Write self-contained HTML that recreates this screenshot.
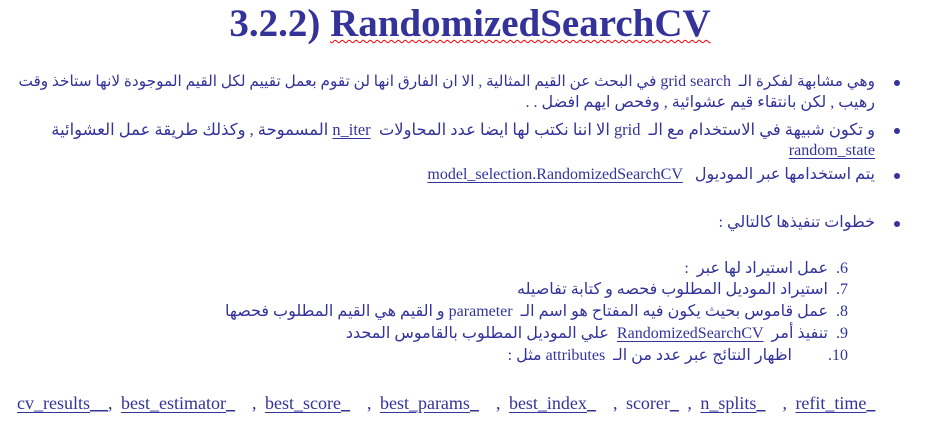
<!DOCTYPE html>
<html><head><meta charset="utf-8"><style>
body{margin:0;width:926px;height:421px;background:#fff;position:relative;overflow:hidden;font-family:"Liberation Serif","DejaVu Sans",serif;color:#333399;}
.t{position:absolute;white-space:nowrap;font-size:16px;line-height:20px;}
.r{direction:rtl;text-align:right;}
.w{text-decoration:underline wavy red;text-decoration-thickness:1px;text-underline-offset:3px;}
.u{text-decoration:underline;}
.b{position:absolute;width:6px;height:6px;border-radius:50%;background:#333399;left:894px;}
</style></head><body>
<div class="t" style="left:0;width:940px;top:0px;text-align:center;font-size:39px;line-height:48px;font-weight:bold;">3.2.2) <span class="w">RandomizedSearchCV</span></div>

<div class="b" style="top:80px"></div>
<div class="t r" style="right:51px;top:72px;font-size:15.3px;">وهي مشابهة لفكرة الـ &nbsp;<span style="font-size:16px">grid search</span> في البحث عن القيم المثالية , الا ان الفارق انها لن تقوم بعمل تقييم لكل القيم الموجودة لانها ستاخذ وقت</div>
<div class="t r" style="right:51px;top:93px;">رهيب , لكن بانتقاء قيم عشوائية , وفحص ايهم افضل . .</div>
<div class="b" style="top:128px"></div>
<div class="t r" style="right:51px;top:120px;font-size:16.4px;">و تكون شبيهة في الاستخدام مع الـ &nbsp;grid الا اننا نكتب لها ايضا عدد المحاولات &nbsp;<span class="w u">n_iter</span> المسموحة , وكذلك طريقة عمل العشوائية</div>
<div class="t" style="right:51px;top:141px;"><span class="w u">random_state</span></div>
<div class="b" style="top:173px"></div>
<div class="t r" style="right:51px;top:165px;">يتم استخدامها عبر الموديول &nbsp;&nbsp;<span class="w u">model_selection.RandomizedSearchCV</span></div>
<div class="b" style="top:221px"></div>
<div class="t r" style="right:51px;top:213px;">خطوات تنفيذها كالتالي :</div>

<div class="t r" style="right:78px;top:259px;">6.&nbsp; عمل استيراد لها عبر &nbsp;:</div>
<div class="t r" style="right:78px;top:280px;">7.&nbsp; استيراد الموديل المطلوب فحصه و كتابة تفاصيله</div>
<div class="t r" style="right:78px;top:302px;">8.&nbsp; عمل قاموس بحيث يكون فيه المفتاح هو اسم الـ &nbsp;parameter و القيم هي القيم المطلوب فحصها</div>
<div class="t r" style="right:78px;top:324px;">9.&nbsp; تنفيذ أمر &nbsp;<span class="w u">RandomizedSearchCV</span> &nbsp;علي الموديل المطلوب بالقاموس المحدد</div>
<div class="t r" style="right:78px;top:346px;">10.&nbsp;&nbsp;&nbsp;&nbsp;&nbsp;&nbsp;&nbsp;&nbsp; اظهار النتائج عبر عدد من الـ &nbsp;attributes مثل :</div>

<div class="t" style="left:17px;top:393px;font-size:18px;word-spacing:4px;"><span class="w u">cv_results</span><span class="u">__</span>, <span class="w u">best_estimator</span><span class="u">_</span> &nbsp;, <span class="w u">best_score</span><span class="u">_</span> &nbsp;, <span class="w u">best_params</span><span class="u">_</span> &nbsp;, <span class="w u">best_index</span><span class="u">_</span> &nbsp;, scorer<span class="u">_</span> , <span class="w u">n_splits</span><span class="u">_</span> &nbsp;, <span class="w u">refit_time</span><span class="u">_</span></div>
</body></html>
